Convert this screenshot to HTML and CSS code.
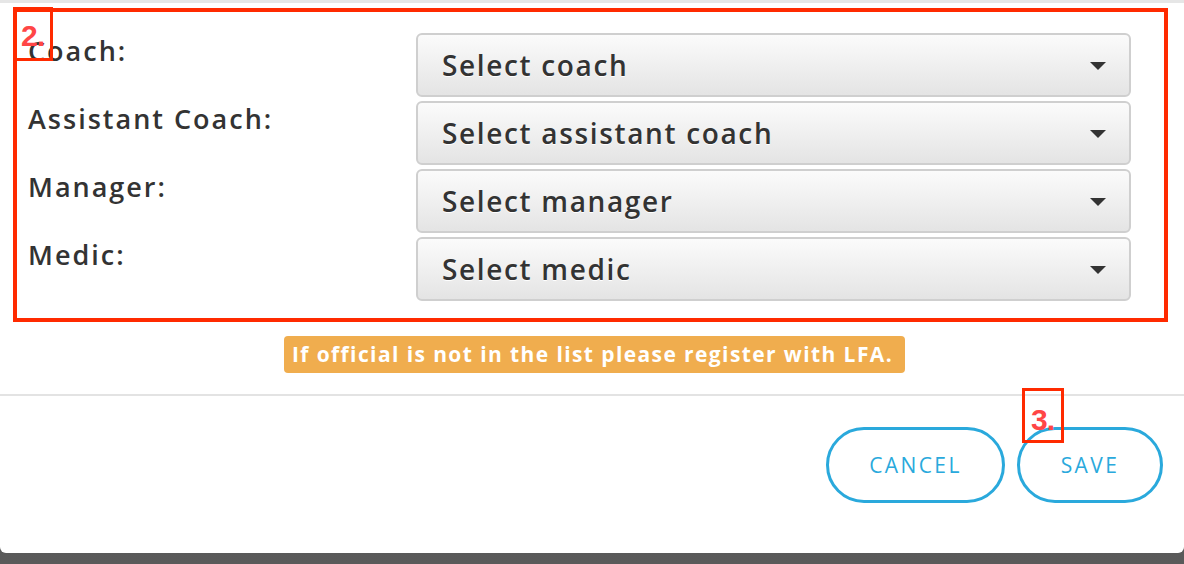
FILE: index.html
```html
<!DOCTYPE html>
<html>
<head>
<meta charset="utf-8">
<link rel="stylesheet" href="styles.css">
</head>
<body>
<div class="modal">
  <div class="officials">
    <span class="marker marker-2">2.</span>
    <div class="row">
      <label class="label">Coach:</label>
      <div class="select"><span>Select coach</span><i class="caret"></i></div>
    </div>
    <div class="row">
      <label class="label">Assistant Coach:</label>
      <div class="select"><span>Select assistant coach</span><i class="caret"></i></div>
    </div>
    <div class="row">
      <label class="label">Manager:</label>
      <div class="select"><span>Select manager</span><i class="caret"></i></div>
    </div>
    <div class="row">
      <label class="label">Medic:</label>
      <div class="select"><span>Select medic</span><i class="caret"></i></div>
    </div>
  </div>
  <div class="notice-wrap">
    <span class="notice">If official is not in the list please register with LFA.</span>
  </div>
  <div class="footer">
    <button class="btn">CANCEL</button>
    <div class="save-wrap">
      <button class="btn btn-save">SAVE</button>
      <span class="marker marker-3">3.</span>
    </div>
  </div>
</div>
</body>
</html>
```

FILE: styles.css
```css
html, body {
  margin: 0;
  padding: 0;
}
body {
  width: 1184px;
  height: 564px;
  overflow: hidden;
  background: linear-gradient(#4a4a4a, #5a5a5a);
  font-family: "Open Sans", "Liberation Sans", sans-serif;
}
.modal {
  background: #fff;
  height: 550px;
  border-top: 3px solid #e6e6e6;
  border-radius: 0 0 6px 6px;
  box-sizing: content-box;
}
.officials {
  position: relative;
  margin: 5px 16px 0 13px;
  border: 4px solid #ff2a00;
  padding: 21px 33px 17px 11px;
  display: flex;
  flex-direction: column;
  gap: 4px;
}
.row {
  display: grid;
  grid-template-columns: 388px 1fr;
  align-items: start;
}
.label {
  font-size: 27px;
  line-height: 36px;
  font-weight: 600;
  letter-spacing: 2px;
  color: #333;
}
.select {
  position: relative;
  height: 64px;
  box-sizing: border-box;
  border: 2px solid #cfcfcf;
  border-radius: 6px;
  background: linear-gradient(#fbfbfb, #e4e4e4);
  display: flex;
  align-items: center;
  padding-left: 24px;
  font-size: 28px;
  font-weight: 600;
  letter-spacing: 1.65px;
  color: #333;
  text-shadow: 0 1px 0 #fff;
}
.caret {
  position: absolute;
  right: 23px;
  top: 27px;
  width: 0;
  height: 0;
  border-left: 8px solid transparent;
  border-right: 8px solid transparent;
  border-top: 8px solid #333;
}
.marker {
  position: absolute;
  box-sizing: border-box;
  border: 3px solid #ff2a00;
  color: #ff4646;
  font-family: "Liberation Sans", Arial, sans-serif;
  font-weight: 700;
  font-size: 30px;
  line-height: 1;
  letter-spacing: -1px;
  padding: 11px 0 0 5px;
}
.marker-2 {
  left: -4px;
  top: -5px;
  width: 40px;
  height: 54px;
}
.notice-wrap {
  display: flex;
  justify-content: center;
  padding: 14px 0 0 5px;
}
.notice {
  background: #f0ad4e;
  color: #fff;
  border-radius: 4px;
  font-size: 21px;
  font-weight: 700;
  letter-spacing: 1.4px;
  line-height: 37px;
  padding: 0 12px 0 8px;
}
.footer {
  margin-top: 21px;
  border-top: 2px solid #e3e3e3;
  display: flex;
  justify-content: flex-end;
  gap: 12px;
  padding: 31px 21px 0 0;
}
.btn {
  height: 76px;
  box-sizing: border-box;
  border: 3px solid #2aa9dc;
  border-radius: 38px;
  background: #fff;
  color: #2aa9dc;
  font-family: "Open Sans", "Liberation Sans", sans-serif;
  font-size: 21px;
  letter-spacing: 2.4px;
  padding: 0;
  width: 179px;
}
.save-wrap {
  position: relative;
}
.btn-save {
  width: 146px;
}
.marker-3 {
  left: 5px;
  top: -39px;
  width: 42px;
  height: 55px;
  padding: 14px 0 0 6px;
}
```
